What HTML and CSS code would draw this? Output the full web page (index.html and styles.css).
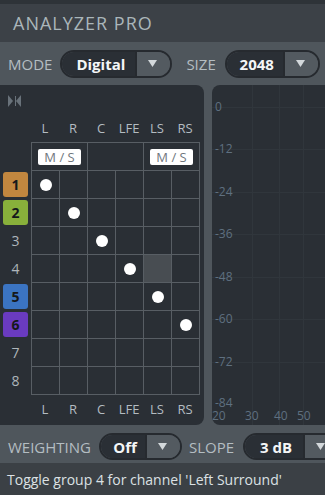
FILE: index.html
```html
<!DOCTYPE html>
<html lang="en">
<head>
    <meta charset="UTF-8">
    <title>Analyzer Pro</title>
    <link rel="stylesheet" href="styles.css">
</head>
<body>
    <div class="topstrip"></div>
    <header class="titlebar">
        <h1>ANALYZER PRO</h1>
    </header>

    <div class="controls">
        <span class="label">MODE</span>
        <div class="select mode">
            <span class="value">Digital</span>
            <span class="arrow"><svg width="9" height="7" viewBox="0 0 9 7"><polygon points="0,0 9,0 4.5,7"/></svg></span>
        </div>
        <span class="label gapl">SIZE</span>
        <div class="select size">
            <span class="value">2048</span>
            <span class="arrow"><svg width="9" height="7" viewBox="0 0 9 7"><polygon points="0,0 9,0 4.5,7"/></svg></span>
        </div>
    </div>

    <main class="panels">
        <section class="matrix-panel">
            <svg class="collapse" width="13" height="12" viewBox="0 0 13 12">
                <polygon points="0,0 5,6 0,12"/>
                <polygon points="13,0 8,6 13,12"/>
                <rect x="7" y="1" width="1" height="10"/>
            </svg>

            <div class="heads top">
                <span>L</span><span>R</span><span>C</span><span>LFE</span><span>LS</span><span>RS</span>
            </div>

            <div class="matrix">
                <div class="rowlabels">
                    <span class="grp g1">1</span>
                    <span class="grp g2">2</span>
                    <span class="num">3</span>
                    <span class="num">4</span>
                    <span class="grp g5">5</span>
                    <span class="grp g6">6</span>
                    <span class="num">7</span>
                    <span class="num">8</span>
                </div>
                <div class="grid">
                    <div class="pair"><span class="ms">M / S</span></div>
                    <div class="pair"></div>
                    <div class="pair"><span class="ms">M / S</span></div>

                    <div class="cell"><i class="dot"></i></div><div class="cell"></div><div class="cell"></div><div class="cell"></div><div class="cell"></div><div class="cell"></div>
                    <div class="cell"></div><div class="cell"><i class="dot"></i></div><div class="cell"></div><div class="cell"></div><div class="cell"></div><div class="cell"></div>
                    <div class="cell"></div><div class="cell"></div><div class="cell"><i class="dot"></i></div><div class="cell"></div><div class="cell"></div><div class="cell"></div>
                    <div class="cell"></div><div class="cell"></div><div class="cell"></div><div class="cell"><i class="dot"></i></div><div class="cell hover"></div><div class="cell"></div>
                    <div class="cell"></div><div class="cell"></div><div class="cell"></div><div class="cell"></div><div class="cell"><i class="dot"></i></div><div class="cell"></div>
                    <div class="cell"></div><div class="cell"></div><div class="cell"></div><div class="cell"></div><div class="cell"></div><div class="cell"><i class="dot"></i></div>
                    <div class="cell"></div><div class="cell"></div><div class="cell"></div><div class="cell"></div><div class="cell"></div><div class="cell"></div>
                    <div class="cell"></div><div class="cell"></div><div class="cell"></div><div class="cell"></div><div class="cell"></div><div class="cell"></div>
                </div>
            </div>

            <div class="heads bottom">
                <span>L</span><span>R</span><span>C</span><span>LFE</span><span>LS</span><span>RS</span>
            </div>
        </section>

        <section class="plot">
            <div class="hline" style="top:22px"></div>
            <div class="hline" style="top:64px"></div>
            <div class="hline" style="top:107px"></div>
            <div class="hline" style="top:149px"></div>
            <div class="hline" style="top:192px"></div>
            <div class="hline" style="top:234px"></div>
            <div class="hline" style="top:277px"></div>
            <div class="vline" style="left:40px"></div>
            <div class="vline" style="left:67px"></div>
            <div class="vline" style="left:91px"></div>

            <span class="ylab" style="top:16px">0</span>
            <span class="ylab" style="top:58px">-12</span>
            <span class="ylab" style="top:101px">-24</span>
            <span class="ylab" style="top:143px">-36</span>
            <span class="ylab" style="top:186px">-48</span>
            <span class="ylab" style="top:228px">-60</span>
            <span class="ylab" style="top:271px">-72</span>
            <span class="ylab" style="top:312px">-84</span>

            <span class="xlab" style="left:0px">20</span>
            <span class="xlab" style="left:33px">30</span>
            <span class="xlab" style="left:62px">40</span>
            <span class="xlab" style="left:85px">50</span>
        </section>
    </main>

    <div class="controls bottombar">
        <span class="label">WEIGHTING</span>
        <div class="select weighting">
            <span class="value">Off</span>
            <span class="arrow"><svg width="9" height="7" viewBox="0 0 9 7"><polygon points="0,0 9,0 4.5,7"/></svg></span>
        </div>
        <span class="label gapm">SLOPE</span>
        <div class="select slope">
            <span class="value">3 dB</span>
            <span class="arrow"><svg width="9" height="7" viewBox="0 0 9 7"><polygon points="0,0 9,0 4.5,7"/></svg></span>
        </div>
    </div>

    <footer class="status">Toggle group 4 for channel 'Left Surround'</footer>
</body>
</html>
```

FILE: styles.css
```css
*{
    box-sizing: border-box;
}
body{
    margin: 0;
    width: 325px;
    height: 495px;
    overflow: hidden;
    background-color: #4f565c;
    font-family: 'Open Sans', 'Noto Sans', sans-serif;
}
.topstrip{
    height: 4px;
    background-color: #2e3338;
}
.titlebar{
    height: 38px;
    background-color: #3c4147;
    display: flex;
    align-items: center;
    padding-left: 13px;
}
.titlebar h1{
    margin: 0;
    font-size: 18px;
    font-weight: normal;
    letter-spacing: 1px;
    color: #aab6ba;
}

/* dropdown rows */
.controls{
    height: 43px;
    display: flex;
    align-items: center;
    padding-left: 8px;
    white-space: nowrap;
}
.label{
    font-size: 15px;
    color: #b4bdc2;
    margin-right: 8px;
}
.gapl{
    margin-left: 14px;
    margin-right: 9px;
}
.gapm{
    margin-left: 7px;
    margin-right: 9px;
}
.select{
    display: flex;
    flex-shrink: 0;
    height: 28px;
    border: 2px solid #262a2f;
    border-radius: 14px;
    overflow: hidden;
}
.select .value{
    flex: 1;
    display: flex;
    align-items: center;
    justify-content: center;
    background-color: #2a2f35;
    color: #f4f6f7;
    font-size: 15px;
    font-weight: bold;
    padding-left: 4px;
}
.select .arrow{
    width: 35px;
    display: flex;
    align-items: center;
    justify-content: center;
    border-left: 2px solid #262a2f;
    background-color: #535a60;
    padding-right: 2px;
}
.arrow svg{
    fill: #d3d8db;
}
.mode{ width: 112px; }
.size{ width: 95px; }
.weighting{ width: 83px; }
.slope{ width: 97px; }

/* panels */
.panels{
    height: 340px;
    display: flex;
    gap: 8px;
}
.matrix-panel{
    width: 204px;
    background-color: #2a2f35;
    border-radius: 0 8px 8px 0;
    padding: 10px 0 0 3px;
}
.collapse{
    display: block;
    margin-left: 5px;
    fill: #69727a;
}
.heads{
    display: flex;
    margin-left: 28px;
    color: #b4bcc1;
    font-size: 13px;
}
.heads span{
    width: 28px;
    text-align: center;
}
.heads.top{
    height: 35px;
    align-items: center;
    padding-top: 7px;
}
.heads.bottom{
    height: 28px;
    align-items: center;
}
.matrix{
    display: flex;
}
.rowlabels{
    width: 28px;
    padding-top: 28px;
    display: flex;
    flex-direction: column;
}
.rowlabels span{
    height: 28px;
    display: flex;
    align-items: center;
    justify-content: center;
    width: 25px;
    font-size: 14px;
}
.num{
    color: #aeb6bb;
}
.grp{
    font-weight: bold;
    color: #15181b;
    position: relative;
    z-index: 0;
}
.grp::before{
    content: "";
    position: absolute;
    left: 0;
    top: 1.5px;
    width: 25px;
    height: 25px;
    border-radius: 3px;
    z-index: -1;
}
.g1::before{ background-color: #c2873f; }
.g2::before{ background-color: #88b03b; }
.g5::before{ background-color: #3b74c2; }
.g6::before{ background-color: #6a3bc0; }

.grid{
    display: grid;
    grid-template-columns: repeat(6, 27px);
    grid-auto-rows: 27px;
    gap: 1px;
    padding: 1px;
    background-color: #585e64;
}
.cell, .pair{
    background-color: #2a2f35;
    display: flex;
    align-items: center;
    justify-content: center;
}
.pair{
    grid-column: span 2;
}
.cell.hover{
    background-color: #484d52;
}
.dot{
    width: 12px;
    height: 12px;
    border-radius: 50%;
    background-color: #ffffff;
}
.ms{
    width: 43px;
    height: 16px;
    background-color: #ffffff;
    border-radius: 2px;
    color: #6f767d;
    font-size: 13px;
    line-height: 16px;
    text-align: center;
}

/* spectrum plot */
.plot{
    flex: 1;
    position: relative;
    overflow: hidden;
    background-color: #2a2f35;
    border-radius: 8px 0 0 8px;
}
.hline{
    position: absolute;
    left: 0;
    right: 0;
    height: 1px;
    background-color: #30363c;
}
.vline{
    position: absolute;
    top: 0;
    bottom: 0;
    width: 1px;
    background-color: #30363c;
}
.ylab, .xlab{
    position: absolute;
    font-size: 12px;
    line-height: 11px;
    color: #5f7080;
}
.ylab{
    left: 3px;
}
.xlab{
    top: 325px;
}

.bottombar{
    height: 38px;
    padding-top: 5px;
}
.bottombar .select{
    height: 27px;
}
.status{
    height: 32px;
    background-color: #3b4045;
    color: #dce1e4;
    font-size: 14px;
    display: flex;
    align-items: center;
    padding-left: 7px;
    white-space: nowrap;
}
```
